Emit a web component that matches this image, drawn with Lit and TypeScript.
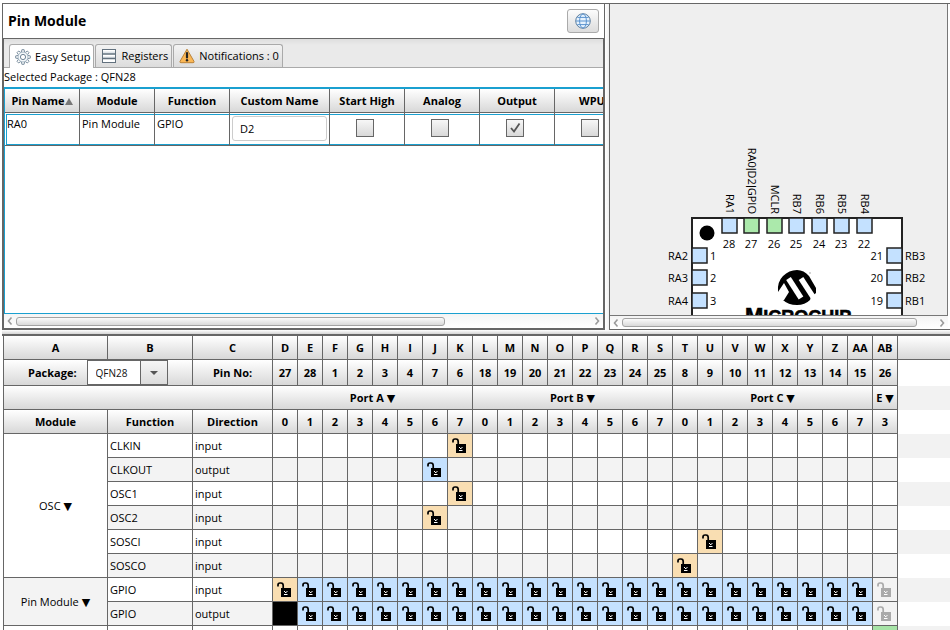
import { LitElement, html, svg, css, nothing } from "lit";
import { customElement, property } from "lit/decorators.js";
import { classMap } from "lit/directives/class-map.js";

const FONT = css`"Open Sans", "Noto Sans", "DejaVu Sans", sans-serif`;

/* ---------- scroll bar ---------- */
@customElement("scroll-bar")
class ScrollBar extends LitElement {
  @property({ type: Number }) size = 70;

  static styles = css`
    :host {
      display: flex;
      align-items: center;
      height: 14px;
      background: linear-gradient(#f4f4f4, #fff);
    }
    svg {
      flex: none;
      width: 12px;
      height: 12px;
      fill: none;
      stroke: #9a9a9a;
      stroke-width: 1.6;
    }
    .track {
      flex: 1;
      min-width: 0;
    }
    .thumb {
      box-sizing: border-box;
      height: 9px;
      border: 1px solid #a3a3a3;
      border-radius: 3px;
      background: linear-gradient(#fbfbfb, #d9d9d9);
    }
  `;

  render() {
    return html`
      <svg viewBox="0 0 12 12" aria-hidden="true"><path d="M7.5 2.5 4.5 6l3 3.5" /></svg>
      <div class="track"><div class="thumb" style="width:${this.size}%"></div></div>
      <svg viewBox="0 0 12 12" aria-hidden="true"><path d="M4.5 2.5 7.5 6l-3 3.5" /></svg>
    `;
  }
}

/* ---------- pin module editor ---------- */
const gear = () => {
  const teeth = Array.from({ length: 8 }, (_, i) => i * 45);
  return html`<svg class="ico" viewBox="0 0 16 16" aria-hidden="true">
    ${teeth.map(
      (a) => svg`<path d="M6.4 3.2 6.9 .7h2.2l.5 2.5" transform="rotate(${a} 8 8)" fill="#fff" stroke="#6f8596" stroke-width=".9" />`
    )}
    <circle cx="8" cy="8" r="5" fill="#f4f8fb" stroke="#8ea3b3" stroke-width=".8" />
    <circle cx="8" cy="8" r="2.6" fill="#fff" stroke="#6f8596" />
  </svg>`;
};
const registers = html`<svg class="ico" viewBox="0 0 16 16" aria-hidden="true">
  <rect x="1.500" y="1.500" width="13" height="13" fill="#fff" stroke="#62717e" />
  <path d="M2 4.500h12M2 9.500h12" stroke="#dfe5ea" stroke-width="2" />
  <path d="M1 6h14M1 10.500h14" stroke="#62717e" stroke-width="1.300" />
</svg>`;
const warning = html`<svg class="ico" viewBox="0 0 16 16" aria-hidden="true">
  <path d="M8 1.2 15 13.4q.4 1.3-.9 1.3H1.900q-1.300 0-.9-1.300Z" fill="#fbb755" stroke="#b98238" />
  <path d="M8 5v4.500" stroke="#222" stroke-width="2.200" stroke-linecap="round" />
  <circle cx="8" cy="12.300" r="1.200" fill="#222" />
</svg>`;
const globe = html`<svg class="ico" viewBox="0 0 16 16" fill="none" stroke="#5b93cf" aria-hidden="true">
  <circle cx="8" cy="8" r="7.300" fill="#e6f2fd" stroke="#5d7f9f" />
  <ellipse cx="8" cy="8" rx="3.400" ry="7" />
  <path d="M1 8h14M2.400 4.400h11.200M2.400 11.600h11.200" />
</svg>`;

const FLAGS = [
  { name: "Start High", on: false },
  { name: "Analog", on: false },
  { name: "Output", on: true },
  { name: "WPU", on: false },
];

@customElement("pin-module")
class PinModule extends LitElement {
  static styles = css`
    :host {
      display: flex;
      flex-direction: column;
      min-width: 0;
      min-height: 0;
      box-sizing: border-box;
      border: 1px solid #666;
      background: #fff;
    }
    .title {
      display: flex;
      align-items: center;
      justify-content: space-between;
      height: 34px;
      flex: none;
      padding: 0 5px;
    }
    h1 {
      margin: 0;
      font-size: 14px;
      line-height: 20px;
    }
    button {
      font: inherit;
      color: inherit;
      padding: 0;
    }
    .web {
      display: flex;
      align-items: center;
      justify-content: center;
      width: 32px;
      height: 24px;
      border: 1px solid #aaa;
      border-radius: 3px;
      background: linear-gradient(#fcfcfc, #dcdcdc);
    }
    .ico {
      width: 16px;
      height: 16px;
      flex: none;
    }
    .body {
      flex: 1;
      min-height: 0;
      display: flex;
      flex-direction: column;
      border: 1px solid #666;
    }
    .tabs {
      display: flex;
      align-items: flex-end;
      gap: 1px;
      height: 28px;
      flex: none;
      padding-left: 5px;
      background: linear-gradient(#dedede, #eaeaea 6px);
      border-bottom: 1px solid #aaa;
    }
    .tab {
      display: flex;
      align-items: center;
      gap: 4px;
      height: 23px;
      padding: 0 3px 0 5px;
      border: 1px solid #aaa;
      border-bottom: 0;
      border-radius: 3px 3px 0 0;
      background: linear-gradient(#f3f3f3, #dcdcdc);
      white-space: nowrap;
    }
    .tab.on {
      height: 24px;
      margin-bottom: -1px;
      background: #fff;
    }
    .pkg {
      flex: none;
      line-height: 17px;
      padding-bottom: 2px;
    }
    .view {
      flex: 1;
      min-height: 0;
      overflow: hidden;
      border: 1px solid #1aa0d0;
      border-top-width: 2px;
      border-right: 0;
    }
    table {
      table-layout: fixed;
      width: 625px;
      border-collapse: separate;
      border-spacing: 0;
    }
    .mid {
      width: 75px;
    }
    .wide {
      width: 100px;
    }
    th {
      height: 23px;
      padding: 0;
      line-height: 20px;
      border-right: 1px solid #666;
      border-bottom: 1px solid #666;
      background: linear-gradient(#fff, #d8d8d8);
      white-space: nowrap;
    }
    .sort {
      display: inline-block;
      width: 8px;
      height: 7px;
      fill: #777;
    }
    td {
      box-sizing: border-box;
      height: 33px;
      padding: 0;
      vertical-align: top;
      border-right: 1px solid #666;
      border-bottom: 1px solid #666;
    }
    .cell {
      box-sizing: border-box;
      height: 31px;
      margin-top: 1px;
      border-top: 1px solid #1aa0d0;
      border-bottom: 1px solid #1aa0d0;
      padding: 1px 2px;
      line-height: 16px;
    }
    .first {
      border-left: 1px solid #1aa0d0;
      padding-left: 0;
      margin-left: 1px;
    }
    input.name {
      box-sizing: border-box;
      width: 95px;
      height: 25px;
      border: 1px solid #ccc;
      border-radius: 3px;
      padding: 0 7px;
      font: inherit;
      background: #fff;
    }
    .checks {
      padding-right: 6px;
    }
    .check {
      display: grid;
      width: 18px;
      height: 18px;
      margin: 3px auto;
    }
    .check input {
      appearance: none;
      box-sizing: border-box;
      grid-area: 1 / 1;
      width: 18px;
      height: 18px;
      margin: 0;
      border: 1px solid #666;
      background: linear-gradient(#f7f7f7, #d8d8d8);
    }
    .check svg {
      grid-area: 1 / 1;
      width: 18px;
      height: 18px;
      pointer-events: none;
    }
  `;

  render() {
    return html`
      <div class="title">
        <h1>Pin Module</h1>
        <button class="web" aria-label="Open web help">${globe}</button>
      </div>
      <div class="body">
        <div class="tabs" role="tablist">
          <button class="tab on" role="tab" aria-selected="true">${gear()}Easy Setup</button>
          <button class="tab" role="tab">${registers}Registers</button>
          <button class="tab" role="tab">${warning}Notifications : 0</button>
        </div>
        <div class="pkg">Selected Package : QFN28</div>
        <div class="view">
          <table>
            <colgroup>
              <col class="mid" /><col class="mid" /><col class="mid" /><col class="wide" />
              ${FLAGS.map(() => html`<col class="mid" />`)}
            </colgroup>
            <thead>
              <tr>
                <th>Pin Name<svg class="sort" viewBox="0 0 8 7" aria-hidden="true"><path d="M4 0 8 7H0Z" /></svg></th>
                <th>Module</th>
                <th>Function</th>
                <th>Custom Name</th>
                ${FLAGS.map((f) => html`<th>${f.name}</th>`)}
              </tr>
            </thead>
            <tbody>
              <tr>
                <td><div class="cell first">RA0</div></td>
                <td><div class="cell">Pin Module</div></td>
                <td><div class="cell">GPIO</div></td>
                <td><div class="cell"><input class="name" type="text" aria-label="Custom Name" .value=${"D2"} /></div></td>
                ${FLAGS.map(
                  (f) => html`<td><div class="cell checks">
                    <div class="check">
                      <input type="checkbox" aria-label=${f.name} ?checked=${f.on} />
                      ${f.on
                        ? html`<svg viewBox="0 0 18 18" aria-hidden="true"><path d="M5 9 8 12.500 13.500 4.500" fill="none" stroke="#555" stroke-width="1.800" /></svg>`
                        : nothing}
                    </div>
                  </div></td>`
                )}
              </tr>
            </tbody>
          </table>
        </div>
        <scroll-bar .size=${74.6}></scroll-bar>
      </div>
    `;
  }
}

/* ---------- package drawing ---------- */
const TOP_PINS = [
  { x: 730, n: "28", label: ["RA1"], used: false },
  { x: 752, n: "27", label: ["RA0", "D2", "GPIO"], used: true },
  { x: 775, n: "26", label: ["MCLR"], used: true },
  { x: 797, n: "25", label: ["RB7"], used: false },
  { x: 820, n: "24", label: ["RB6"], used: false },
  { x: 842, n: "23", label: ["RB5"], used: false },
  { x: 865, n: "22", label: ["RB4"], used: false },
];
const SIDE_PINS = [
  { y: 256, left: "RA2", ln: "1", rn: "21", right: "RB3" },
  { y: 278, left: "RA3", ln: "2", rn: "20", right: "RB2" },
  { y: 301, left: "RA4", ln: "3", rn: "19", right: "RB1" },
];

@customElement("package-view")
class PackageView extends LitElement {
  static styles = css`
    :host {
      display: flex;
      flex-direction: column;
      min-width: 0;
      min-height: 0;
      border-left: 1px solid #666;
      border-top: 1px solid #666;
      background: #fff;
    }
    .canvas {
      flex: 1;
      min-height: 0;
      display: flex;
      margin-right: 2px;
      overflow: hidden;
      background: #efefef;
      border-right: 1px solid #777;
      border-bottom: 1px solid #777;
    }
    .chip {
      flex: none;
      width: 337px;
      height: 311px;
      font-size: 11px;
    }
    .pin {
      fill: #c4e1ff;
      stroke: #222;
      stroke-width: 1.500;
    }
    .pin.used {
      fill: #abe9ab;
    }
    .end {
      text-anchor: end;
    }
    .center {
      text-anchor: middle;
    }
    .bar {
      font-family: "Liberation Sans", Arial, sans-serif;
    }
    .cut {
      fill: none;
      stroke: #fff;
      stroke-width: 5.500;
    }
    .brand {
      font-family: "Liberation Sans", Arial, sans-serif;
      font-weight: 700;
      font-size: 18px;
      stroke: #000;
      stroke-width: 0.6;
    }
    .big {
      font-size: 22px;
    }
    scroll-bar {
      height: 13px;
      margin-right: 2px;
    }
  `;

  render() {
    return html`
      <div class="canvas">
        <svg class="chip" viewBox="610 4 337 311">
          <rect x="692" y="218" width="210" height="130" fill="#fff" stroke="#222" stroke-width="2" />
          <circle cx="707" cy="233" r="7.500" />
          ${TOP_PINS.map(
            (p) => svg`
              <rect class=${p.used ? "pin used" : "pin"} x=${p.x - 8} y="218" width="15" height="15" />
              <text class="center" x=${p.x - 1} y="248">${p.n}</text>
              <text class="end" transform="translate(${p.x - 4} 214) rotate(90)">${p.label.map(
                (part, i) => svg`${i ? svg`<tspan class="bar">|</tspan>` : nothing}<tspan>${part}</tspan>`
              )}</text>`
          )}
          ${SIDE_PINS.map(
            (p) => svg`
              <rect class="pin" x="692" y=${p.y - 8} width="15" height="15" />
              <text class="end" x="688" y=${p.y + 4}>${p.left}</text>
              <text x="710" y=${p.y + 4}>${p.ln}</text>
              <rect class="pin" x="887" y=${p.y - 8} width="15" height="15" />
              <text class="end" x="883" y=${p.y + 4}>${p.rn}</text>
              <text x="905" y=${p.y + 4}>${p.right}</text>`
          )}
          <path d="M778 292Q777 282 783 276Q789 270 797 270Q804 270 809 276L816 288V293L811 297L810 300Q805 305 797 305Q788 305 783 300L780 296Z" />
          <path d="M776 293 778 292 784 283 789 292 784 300H776Z" fill="#fff" />
          <path d="M788.500 278.500 801 298" class="cut" />
          <path d="M801 278.500 815 300" class="cut" />
          <circle cx="810" cy="273" r=".7" fill="#888" />
          <text x="745" y="323" class="brand"><tspan class="big">M</tspan>ICROCHIP</text>
        </svg>
      </div>
      <scroll-bar .size=${94}></scroll-bar>
    `;
  }
}

/* ---------- pin manager grid ---------- */
const LETTERS = ["D","E","F","G","H","I","J","K","L","M","N","O","P","Q","R","S","T","U","V","W","X","Y","Z","AA","AB"];
const PIN_NO = [27,28,1,2,3,4,7,6,18,19,20,21,22,23,24,25,8,9,10,11,12,13,14,15,26];
const BITS = [0,1,2,3,4,5,6,7,0,1,2,3,4,5,6,7,0,1,2,3,4,5,6,7,3];
const PORTS = [
  { name: "Port A", span: 8 },
  { name: "Port B", span: 8 },
  { name: "Port C", span: 8 },
  { name: "E", span: 1 },
];

type Mark = "" | "amber" | "blue" | "off" | "black" | "green";
const only = (i: number, m: Mark): Mark[] => LETTERS.map((_, k) => (k === i ? m : ""));
const gpio = (first: Mark): Mark[] => LETTERS.map((_, k) => (k === 0 ? first : k === 24 ? "off" : "blue"));

interface Row { module?: string; span?: number; fn: string; dir: string; marks: Mark[]; }
const ROWS: Row[] = [
  { module: "OSC", span: 6, fn: "CLKIN", dir: "input", marks: only(7, "amber") },
  { fn: "CLKOUT", dir: "output", marks: only(6, "blue") },
  { fn: "OSC1", dir: "input", marks: only(7, "amber") },
  { fn: "OSC2", dir: "input", marks: only(6, "amber") },
  { fn: "SOSCI", dir: "input", marks: only(17, "amber") },
  { fn: "SOSCO", dir: "input", marks: only(16, "amber") },
  { module: "Pin Module", span: 2, fn: "GPIO", dir: "input", marks: gpio("amber") },
  { fn: "GPIO", dir: "output", marks: gpio("black") },
  { fn: "", dir: "", marks: only(24, "green") },
];

const lock = () => html`<svg class="lock" viewBox="0 0 14 15" aria-hidden="true">
  <path d="M1 4.500V3Q1 1 3 1H4Q6.200 1 6.200 3.500V6" fill="none" stroke="currentColor" stroke-width="1.700" />
  <path d="M4 6H14V15H4Z" fill="currentColor" />
  <path d="M7 9h1v1H7zM9.500 9h1v1h-1zM8 10h1.500v1H8zM7 12h3.500v1H7z" fill="#fff" />
</svg>`;

@customElement("pin-grid")
class PinGrid extends LitElement {
  static styles = css`
    :host {
      display: block;
      overflow: hidden;
      margin-left: 3px;
      border-left: 1px solid #666;
      background: #fff;
    }
    table {
      table-layout: fixed;
      width: 100%;
      min-width: 900px;
      border-collapse: separate;
      border-spacing: 0;
    }
    .a { width: 104px; }
    .b { width: 85px; }
    .c { width: 80px; }
    .pin { width: 25px; }
    th,
    td {
      box-sizing: border-box;
      height: 24px;
      padding: 0;
      line-height: 16px;
      border-right: 1px solid #666;
      border-bottom: 1px solid #666;
      white-space: nowrap;
    }
    th {
      background: linear-gradient(#fff, #d8d8d8);
    }
    .tall th {
      height: 26px;
    }
    td {
      padding-left: 2px;
    }
    .alt {
      background: #f3f3f3;
    }
    tr > .rest {
      border: 0;
      background: #fff;
    }
    tr:nth-child(odd) > .rest {
      background: #f2f2f2;
    }
    .letters > th.rest {
      background: linear-gradient(#fff, #d8d8d8);
      border-bottom: 1px solid #666;
    }
    .package {
      display: flex;
      align-items: center;
      gap: 10px;
      padding-left: 24px;
      height: 25px;
    }
    .combo {
      display: grid;
      grid-template-columns: 53px 28px;
      height: 25px;
      width: 81px;
    }
    .combo select {
      appearance: none;
      grid-area: 1 / 1 / 2 / 3;
      box-sizing: border-box;
      height: 25px;
      border: 1px solid #666;
      border-radius: 0;
      margin: 0;
      padding: 0 8px;
      font: inherit;
      font-size: 10px;
      font-weight: 400;
      color: #111;
      background: #fff;
    }
    .arrow {
      grid-area: 1 / 2;
      display: flex;
      align-items: center;
      justify-content: center;
      border: 1px solid #666;
      background: linear-gradient(#f6f6f6, #dcdcdc);
      pointer-events: none;
    }
    .arrow svg {
      width: 8px;
      height: 4px;
      fill: #555;
    }
    .fold {
      border: 0;
      padding: 0;
      background: none;
      font: inherit;
      color: #000;
    }
    .module {
      padding: 0;
      text-align: center;
    }
    td.mark {
      padding: 0 0 0 4px;
    }
    .amber { background: #f9deb2; }
    .blue { background: #c4e1ff; }
    .off { background: #f3f3f3; color: #aaa; }
    .black { background: #000; }
    .green { background: #a6e3a6; }
    .lock {
      display: block;
      width: 14px;
      height: 15px;
    }
  `;

  private cell(m: Mark, alt: boolean) {
    const icon = m === "amber" || m === "blue" || m === "off";
    return html`<td class=${classMap({ mark: true, alt: alt && !m, [m || "plain"]: true })}>${icon ? lock() : nothing}</td>`;
  }

  render() {
    return html`
      <table>
        <colgroup>
          <col class="a" /><col class="b" /><col class="c" />
          ${LETTERS.map(() => html`<col class="pin" />`)}
          <col />
        </colgroup>
        <thead>
          <tr class="letters">
            <th>A</th><th>B</th><th>C</th>
            ${LETTERS.map((l) => html`<th>${l}</th>`)}
            <th class="rest"></th>
          </tr>
          <tr class="tall">
            <th colspan="2">
              <div class="package">
                <label for="package">Package:</label>
                <div class="combo">
                  <select id="package"><option>QFN28</option></select>
                  <span class="arrow"><svg viewBox="0 0 8 4" aria-hidden="true"><path d="M0 0H8L4 4Z" /></svg></span>
                </div>
              </div>
            </th>
            <th>Pin No:</th>
            ${PIN_NO.map((n) => html`<th>${n}</th>`)}
            <th class="rest"></th>
          </tr>
          <tr>
            <th colspan="3"></th>
            ${PORTS.map((p) => html`<th colspan=${p.span}><button class="fold">${p.name} ▼</button></th>`)}
            <th class="rest"></th>
          </tr>
          <tr>
            <th>Module</th><th>Function</th><th>Direction</th>
            ${BITS.map((b) => html`<th>${b}</th>`)}
            <th class="rest"></th>
          </tr>
        </thead>
        <tbody>
          ${ROWS.map((r, i) => {
            const alt = i % 2 === 1;
            const odd = i >= 6 && i < 8;
            return html`<tr>
              ${r.span
                ? html`<td class=${classMap({ module: true, alt: odd })} rowspan=${r.span}>
                    <button class="fold">${r.module} ▼</button>
                  </td>`
                : r.fn
                  ? nothing
                  : html`<td></td>`}
              <td class=${classMap({ alt })}>${r.fn}</td>
              <td class=${classMap({ alt })}>${r.dir}</td>
              ${r.marks.map((m) => this.cell(m, alt))}
              <td class="rest"></td>
            </tr>`;
          })}
        </tbody>
      </table>
    `;
  }
}

/* ---------- page ---------- */
@customElement("app-root")
class AppRoot extends LitElement {
  static styles = css`
    :host {
      display: grid;
      grid-template-rows: minmax(0, 330fr) 6px minmax(0, 294fr);
      height: 100vh;
      overflow: hidden;
      background: #fff;
      color: #000;
      font: 11px/16px ${FONT};
    }
    .top {
      display: grid;
      grid-template-columns: minmax(0, 603fr) 4px minmax(0, 341fr);
      padding: 3px 0 0 2px;
    }
    .divider {
      background: linear-gradient(90deg, #fff, #f0f0f0);
      border-top: 1px solid #666;
    }
    package-view {
      border-bottom: 1px solid #666;
    }
    .splitter {
      box-sizing: border-box;
      margin-left: 2px;
      background: linear-gradient(#fff, #d5d5d5);
      border-bottom: 2px solid #666;
    }
  `;

  render() {
    return html`
      <div class="top">
        <pin-module></pin-module>
        <div class="divider"></div>
        <package-view></package-view>
      </div>
      <div class="splitter"></div>
      <pin-grid></pin-grid>
    `;
  }
}
